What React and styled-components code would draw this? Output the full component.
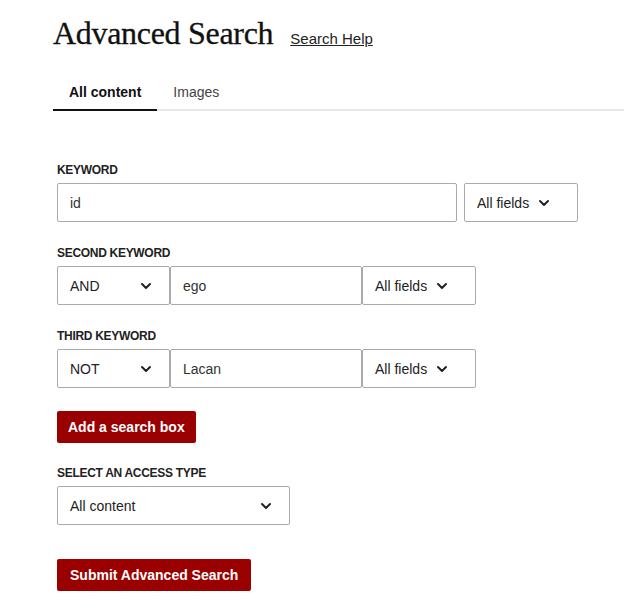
import React from "react";
import styled, { createGlobalStyle } from "styled-components";

const Global = createGlobalStyle`
  body {
    margin: 0;
    background: #fff;
    font-family: "Liberation Sans", Arial, sans-serif;
    color: #222;
  }
`;

const Chevron = () => (
  <svg width="12" height="8" viewBox="0 0 12 8" fill="none">
    <path d="M2 2l4 4 4-4" stroke="#222" strokeWidth="2" strokeLinecap="round" strokeLinejoin="round" />
  </svg>
);

const App = () => {
  return (
    <Page>
      <Global />
      <Header>
        <Title>Advanced Search</Title>
        <HelpLink href="#">Search Help</HelpLink>
      </Header>
      <Tabs>
        <Tab active>All content</Tab>
        <Tab>Images</Tab>
      </Tabs>
      <Form>
        <Field>
          <Label>Keyword</Label>
          <Row>
            <TextBox width="400px">id</TextBox>
            <Gap />
            <Select width="114px">
              All fields <Chevron />
            </Select>
          </Row>
        </Field>
        <Field>
          <Label>Second keyword</Label>
          <Row>
            <Select width="113px" wide>
              AND <Chevron />
            </Select>
            <TextBox width="192px">ego</TextBox>
            <Select width="114px">
              All fields <Chevron />
            </Select>
          </Row>
        </Field>
        <Field last>
          <Label>Third keyword</Label>
          <Row>
            <Select width="113px" wide>
              NOT <Chevron />
            </Select>
            <TextBox width="192px">Lacan</TextBox>
            <Select width="114px">
              All fields <Chevron />
            </Select>
          </Row>
        </Field>
        <Button>Add a search box</Button>
        <Field>
          <Label>Select an access type</Label>
          <Row>
            <Select width="233px" wide>
              All content <Chevron />
            </Select>
          </Row>
        </Field>
        <Button submit>Submit Advanced Search</Button>
      </Form>
    </Page>
  );
};

const Page = styled.div`
  padding: 15px 15px 20px 53px;
`;

const Header = styled.div`
  display: flex;
  align-items: baseline;
  gap: 17px;
`;

const Title = styled.h1`
  margin: 0;
  font-family: "Liberation Serif", "Times New Roman", serif;
  font-weight: 400;
  font-size: 32px;
  color: #111;
  letter-spacing: -0.3px;
  -webkit-text-stroke: 0.3px #111;
`;

const HelpLink = styled.a`
  font-size: 15px;
  color: #222;
  text-decoration: underline;
`;

const Tabs = styled.div`
  display: flex;
  margin-top: 32px;
  border-bottom: 2px solid #e8e8e8;
`;

const Tab = styled.div`
  padding: 0 16px 9px 16px;
  font-size: 14px;
  font-weight: ${(p) => (p.active ? 700 : 400)};
  color: ${(p) => (p.active ? "#111" : "#444")};
  margin-bottom: -2px;
  border-bottom: 2px solid ${(p) => (p.active ? "#111" : "transparent")};
`;

const Form = styled.div`
  padding: 52px 0 0 4px;
  display: flex;
  flex-direction: column;
  align-items: flex-start;
`;

const Field = styled.div`
  margin-bottom: ${(p) => (p.last ? "23px" : "24px")};
`;

const Label = styled.div`
  font-size: 12px;
  font-weight: 700;
  text-transform: uppercase;
  color: #222;
  letter-spacing: -0.3px;
  margin-bottom: 6px;
`;

const Row = styled.div`
  display: flex;
`;

const Gap = styled.div`
  width: 7px;
`;

const TextBox = styled.div`
  box-sizing: border-box;
  width: ${(p) => p.width};
  height: 39px;
  border: 1px solid #aaa;
  border-radius: 2px;
  display: flex;
  align-items: center;
  padding: 0 12px;
  font-size: 14px;
  color: #333;
`;

const Select = styled.div`
  box-sizing: border-box;
  width: ${(p) => p.width};
  height: 39px;
  border: 1px solid #aaa;
  border-radius: 2px;
  display: flex;
  align-items: center;
  justify-content: ${(p) => (p.wide ? "space-between" : "flex-start")};
  gap: 9px;
  padding: 0 ${(p) => (p.wide ? "17px" : "12px")} 0 12px;
  font-size: 14px;
  color: #222;
`;

const Button = styled.button`
  margin: ${(p) => (p.submit ? "10px 0 0" : "0 0 23px")};
  height: 32px;
  padding: 0 ${(p) => (p.submit ? "13px" : "11px")};
  border: none;
  border-radius: 2px;
  background: #9b0000;
  color: #fff;
  font-family: "Liberation Sans", Arial, sans-serif;
  font-size: 14px;
  font-weight: 700;
  letter-spacing: 0;
`;

export default App;
